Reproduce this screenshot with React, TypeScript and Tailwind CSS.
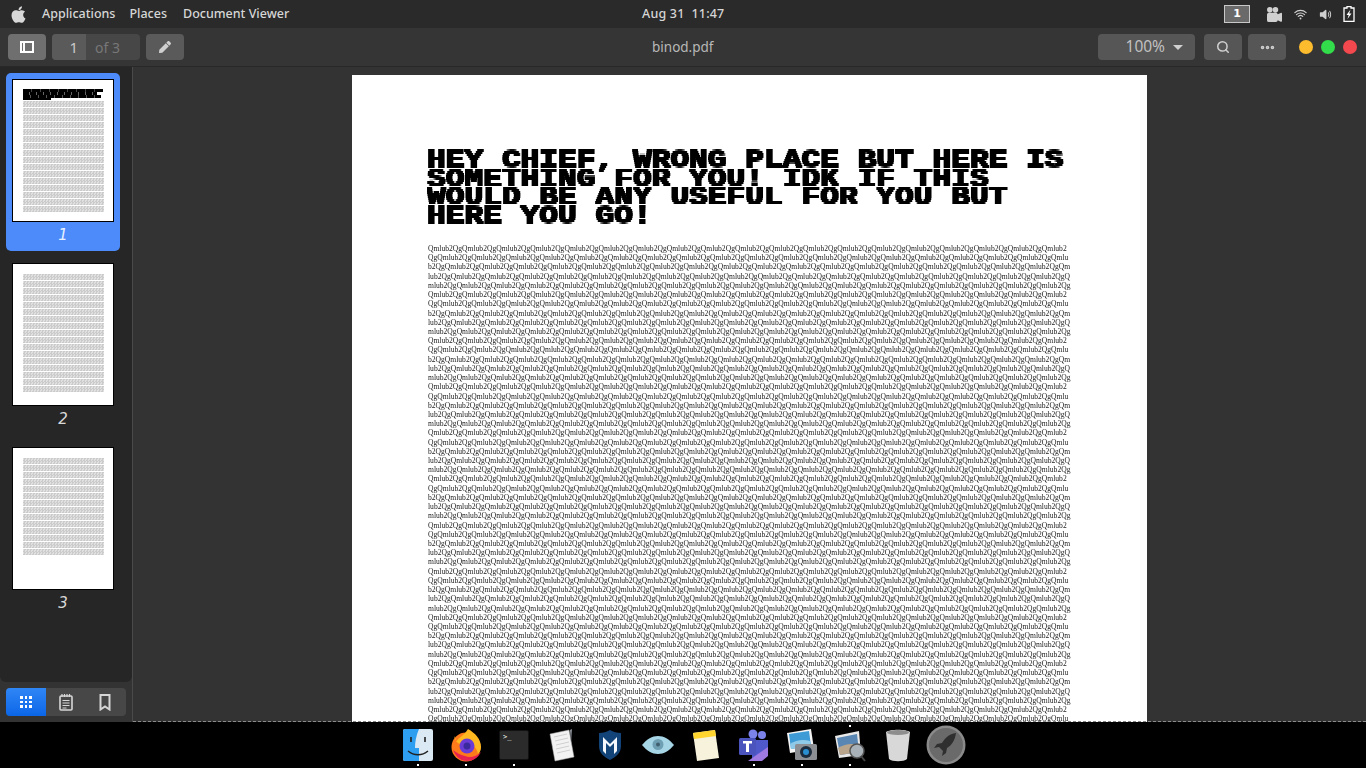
import { FaApple, FaPen } from "react-icons/fa";
import { BsCameraReelsFill } from "react-icons/bs";
import { IoVolumeMedium, IoWifi } from "react-icons/io5";
import { Ellipsis, Search } from "lucide-react";

const UI_FONT = "font-['Noto_Sans','Open_Sans',sans-serif]";
const BODY_TEXT = "Qmlub2Qg".repeat(1100);

function ThumbRows({ rows }: { rows: number }) {
  return (
    <div className="flex flex-col gap-[1px]">
      {Array.from({ length: rows }).map((_, i) => (
        <div
          key={i}
          className="h-[6px] w-[81px] bg-[repeating-conic-gradient(#cbcbcb_0_25%,#e0e0e0_0_50%)] bg-[length:3px_3px]"
        />
      ))}
    </div>
  );
}

function Thumb({ page, selected, rows }: { page: number; selected?: boolean; rows: number }) {
  return (
    <div className={`mx-[6px] flex h-[178px] w-[114px] flex-col items-center rounded-[5px] pt-[6px] ${selected ? "bg-[#4d8bfa]" : ""}`}>
      <div className={`h-[143px] w-[102px] border border-black bg-white px-[10px] ${selected ? "pt-[9px]" : "pt-[10px]"}`}>
        {selected ? (
          <div className="mb-[1px] flex flex-col">
            <div className="h-[3px] w-[80px] bg-[repeating-linear-gradient(90deg,#000_0_8px,#444_8px_9px)]" />
            <div className="h-[3px] w-[74px] bg-[repeating-linear-gradient(90deg,#000_0_6px,#666_6px_7px)]" />
            <div className="h-[3px] w-[78px] bg-[repeating-linear-gradient(90deg,#000_0_7px,#555_7px_8px)]" />
            <div className="h-[2px] w-[28px] bg-black" />
          </div>
        ) : null}
        <ThumbRows rows={rows} />
      </div>
      <span className={`mt-[3px] font-['DejaVu_Sans',sans-serif] text-[15px] leading-[20px] font-extralight italic ${selected ? "text-[#e6f0ff]" : "text-[#d8d8d8]"}`}>
        {page}
      </span>
    </div>
  );
}

function DockItem({ children, dot }: { children: React.ReactNode; dot?: boolean }) {
  return (
    <div className="relative flex h-[46px] w-[48px] items-center justify-center">
      {children}
      {dot ? <span className="absolute bottom-[2px] left-1/2 h-[2px] w-[2px] -translate-x-1/2 bg-white" /> : null}
    </div>
  );
}

function Dock() {
  return (
    <div className="flex h-[46px] shrink-0 justify-center bg-black pr-[2px]">
      <DockItem dot>
        <svg width="32" height="34" viewBox="0 0 32 34">
          <rect x="1" y="1" width="30" height="32" rx="2" fill="#dbe9f4" />
          <path d="M3 1h14c-3 7-4 13-4 19h4v13H3a2 2 0 0 1-2-2V3a2 2 0 0 1 2-2z" fill="#2e9ff0" />
          <path d="M6 23c6 5 14 5 20 0" fill="none" stroke="#222" strokeWidth="1.4" />
          <path d="M9 9v5M23 9v5" stroke="#222" strokeWidth="1.6" />
        </svg>
      </DockItem>
      <DockItem dot>
        <svg width="32" height="34" viewBox="0 0 32 34">
          <circle cx="16" cy="19" r="14.5" fill="#ff7a1a" />
          <path d="M4 8c2 2 2 5 2 6 3-5 8-6 12-13 7 4 13 10 13 18 0 3-1 5-3 7-2-8-6-10-12-10-5 0-9 2-12-8z" fill="#ffb81f" />
          <path d="M3 22c3 8 9 11 14 11 6 0 11-3 14-9-5 5-11 6-16 4-5-1-8-3-12-6z" fill="#e8224f" />
          <circle cx="17" cy="18" r="7.5" fill="#6b3bd6" />
          <circle cx="17" cy="18" r="3.5" fill="#3b2a9e" />
        </svg>
      </DockItem>
      <DockItem dot>
        <div className="h-[30px] w-[30px] rounded-[2px] border border-[#111] bg-[#2b2b2b] pt-[2px] pl-[3px] font-['DejaVu_Sans_Mono',monospace] text-[7px] leading-[8px] text-white">
          &gt;_
        </div>
      </DockItem>
      <DockItem>
        <svg width="28" height="34" viewBox="0 0 28 34">
          <path d="M2 6l19-4 5 27-19 4z" fill="#f2f2f2" stroke="#aaa" strokeWidth=".5" />
          <path d="M6 9l13-3M7 13l13-3M8 17l13-3M8 21l13-3M9 25l13-3" stroke="#c5c5c5" strokeWidth=".8" />
          <path d="M22 2l2-1-1 14z" fill="#8a8f96" />
        </svg>
      </DockItem>
      <DockItem>
        <svg width="24" height="32" viewBox="0 0 24 32">
          <path d="M12 1c3 2 7 3 11 3v13c0 7-5 11-11 14C6 28 1 24 1 17V4c4 0 8-1 11-3z" fill="#12447a" />
          <path d="M5 22V8l7 7 7-7v14l-3 3V14l-4 4-4-4v11z" fill="#f4f7fb" />
        </svg>
      </DockItem>
      <DockItem>
        <svg width="34" height="20" viewBox="0 0 34 20">
          <path d="M1 10c5-6 10-9 16-9s11 3 16 9c-5 6-10 9-16 9S6 16 1 10z" fill="#a6d6e6" />
          <circle cx="17" cy="9.5" r="5.5" fill="#6f9fb3" />
          <circle cx="17" cy="9.5" r="2" fill="#40606f" />
        </svg>
      </DockItem>
      <DockItem>
        <svg width="28" height="34" viewBox="0 0 28 34">
          <path d="M1 5l22-3 4 28-22 3z" fill="#f6f2dc" />
          <path d="M1 5l22-3 1 6-22 3z" fill="#ffd52e" />
        </svg>
      </DockItem>
      <DockItem dot>
        <svg width="32" height="34" viewBox="0 0 32 34">
          <circle cx="24" cy="7" r="4" fill="#7b83eb" />
          <circle cx="15" cy="6" r="4.5" fill="#7b83eb" />
          <path d="M14 12h16v12l-10 8h-6z" fill="#5059c9" />
          <rect x="1" y="10" width="17" height="17" rx="1.5" fill="#4b53bc" />
          <path d="M5 13h9v2.5h-3V24H8v-8.500H5z" fill="#fff" />
          <path d="M10 33l20-14v9l-6 5z" fill="#9f7ae0" />
        </svg>
      </DockItem>
      <DockItem dot>
        <svg width="32" height="34" viewBox="0 0 32 34">
          <path d="M1 5l24-4 3 20-24 4z" fill="#f4f4f4" />
          <path d="M3 6l20-3 2 15-20 3z" fill="#3f9bd6" />
          <path d="M4 16c6-4 13-5 20-3l1 5-20 3z" fill="#8fc9e8" />
          <rect x="9" y="16" width="22" height="16" rx="1.500" fill="#8b8f94" />
          <circle cx="20" cy="24" r="6" fill="#1a2c3d" />
          <circle cx="20" cy="24" r="3" fill="#2a8fd0" />
        </svg>
      </DockItem>
      <DockItem dot>
        <svg width="32" height="34" viewBox="0 0 32 34">
          <path d="M1 8l24-5 2 24-22 3z" fill="#e8e8e8" />
          <path d="M3 10l20-4 2 18-19 3z" fill="#5a86b3" />
          <path d="M4 20c7-4 13-5 21-3l0 7-19 3z" fill="#b9a58c" />
          <circle cx="23" cy="23" r="7" fill="#a9b2b8" stroke="#555" strokeWidth="1.500" />
          <path d="M27 28l4 5" stroke="#444" strokeWidth="2" />
        </svg>
        <span className="absolute top-[3px] left-1/2 h-[2px] w-[2px] -translate-x-1/2 bg-white" />
      </DockItem>
      <DockItem>
        <svg width="26" height="34" viewBox="0 0 26 34">
          <path d="M1 4c4-3 20-3 24 0l-3 27c-3 3-15 3-18 0z" fill="#d8d8d8" />
          <ellipse cx="13" cy="4.500" rx="11" ry="2.500" fill="#8e8e8e" />
        </svg>
      </DockItem>
      <DockItem>
        <svg width="40" height="40" viewBox="0 0 40 40">
          <circle cx="20" cy="20" r="19.500" fill="#8a8a8a" />
          <circle cx="20" cy="20" r="17" fill="#6a6a6a" />
          <path d="M30 8c-7 1-11 5-14 10l-5 1-3 4 5-1 4 4-1 5 4-3 1-5c5-3 8-8 9-15z" fill="#2f2f2f" />
        </svg>
      </DockItem>
    </div>
  );
}

export default function App() {
  return (
    <div className={`flex h-[768px] w-[1366px] flex-col overflow-hidden bg-black ${UI_FONT}`}>
      {/* blocky look of the pdf's pixel font */}
      <svg className="absolute h-0 w-0">
        <filter id="pixelate" x="0" y="0" width="100%" height="100%">
          <feFlood x="1" y="1" width="1" height="1" />
          <feComposite width="2" height="2" />
          <feTile result="grid" />
          <feComposite in="SourceGraphic" in2="grid" operator="in" />
          <feMorphology operator="dilate" radius="1" />
        </filter>
      </svg>

      <header className="relative flex h-[28px] shrink-0 items-center bg-[#2a2a2a] text-[12.500px] font-medium text-[#d6d6d6]">
        <FaApple className="ml-[9px] h-[19px] w-[19px] text-[#d8d8d8]" />
        <nav className="ml-[14px] flex gap-[14px]">
          <span>Applications</span>
          <span>Places</span>
          <span className="ml-[2px]">Document Viewer</span>
        </nav>
        <span className="absolute left-[642px] tracking-[0.2px]">Aug 31&nbsp;&nbsp;11:47</span>
        <div className="mr-[11px] ml-auto flex items-center gap-[12px]">
          <span className="flex h-[18px] w-[26px] items-center justify-center border border-[#c8c8c8] bg-[#6a6a6a] font-['DejaVu_Sans',sans-serif] text-[11px] font-bold text-white">
            1
          </span>
          <span className="flex items-center gap-[10px] pl-[4px] text-[#d0d0d0]">
            <BsCameraReelsFill className="h-[15px] w-[17px]" />
            <IoWifi className="h-[15px] w-[15px]" />
            <IoVolumeMedium className="h-[15px] w-[15px]" />
            <svg width="12" height="16" viewBox="0 0 12 16" className="text-white">
              <path d="M4 .5h4v1.500h3v13.500H1V2h3z" fill="none" stroke="currentColor" strokeWidth="1.300" />
              <path d="M7.500 3.500L3.500 9h2.200l-1.200 4 4-5.500H6.200z" fill="currentColor" />
            </svg>
          </span>
        </div>
      </header>

      <div className="flex h-[39px] shrink-0 items-center border-b border-[#282828] bg-[#353535] pl-[8px] text-[#cfcfcf]">
        <button className="flex h-[26px] w-[38px] items-center justify-center rounded-[4px] bg-[#6f6f6f]">
          <span className="flex h-[12px] w-[14px] border-2 border-white">
            <span className="w-[3px] border-r-2 border-white" />
          </span>
        </button>
        <div className="ml-[6px] flex h-[26px] w-[88px] overflow-hidden rounded-[4px] bg-[#474747]">
          <span className="flex w-[34px] items-center justify-end bg-[#5a5a5a] pr-[8px] text-[15px] text-[#c8c8c8]">1</span>
          <span className="flex items-center pl-[9px] text-[14px] text-[#777777]">of 3</span>
        </div>
        <button className="ml-[6px] flex h-[26px] w-[38px] items-center justify-center rounded-[4px] bg-[#5a5a5a]">
          <FaPen className="h-[12px] w-[12px]" />
        </button>
        <span className="ml-[468px] text-[13.500px] text-[#b8b8b8]">binod.pdf</span>
        <div className="ml-auto flex items-center gap-[6px] pr-[9px]">
          <button className="mr-[3px] flex h-[26px] w-[97px] items-center justify-end gap-[8px] rounded-[4px] bg-[#565656] pr-[12px] text-[15.500px] text-[#c0c0c0]">
            100%
            <span className="h-0 w-0 border-x-[5px] border-t-[5px] border-x-transparent border-t-[#d0d0d0]" />
          </button>
          <button className="flex h-[26px] w-[38px] items-center justify-center rounded-[4px] bg-[#565656]">
            <Search className="h-[14px] w-[14px]" strokeWidth={2.600} />
          </button>
          <button className="flex h-[26px] w-[38px] items-center justify-center rounded-[4px] bg-[#565656]">
            <Ellipsis className="h-[17px] w-[17px]" strokeWidth={3} />
          </button>
          <span className="ml-[7px] h-[14px] w-[14px] rounded-full bg-[#fdbc2e]" />
          <span className="ml-[2px] h-[14px] w-[14px] rounded-full bg-[#32dc4a]" />
          <span className="ml-[2px] h-[14px] w-[14px] rounded-full bg-[#f4484f]" />
        </div>
      </div>

      <div className="flex min-h-0 flex-1">
        <aside className="flex w-[133px] shrink-0 flex-col border-r border-[#4a4a4a] bg-[#333333]">
          <div className="flex flex-1 flex-col gap-[6px] rounded-b-[6px] bg-[#262626] pt-[6px]">
            <Thumb page={1} selected rows={16} />
            <Thumb page={2} rows={17} />
            <Thumb page={3} rows={14} />
          </div>
          <div className="mx-[6px] mt-[6px] mb-[6px] flex h-[28px] w-[120px] rounded-[4px] bg-[#474747] text-[#d6d6d6]">
            <span className="flex w-[40px] items-center justify-center rounded-l-[4px] bg-gradient-to-b from-[#2f86f5] to-[#0a66e8]">
              <span className="grid grid-cols-3 gap-[2px]">
                {Array.from({ length: 9 }).map((_, i) => (
                  <span key={i} className="h-[2.500px] w-[2.500px] bg-white" />
                ))}
              </span>
            </span>
            <span className="flex w-[40px] items-center justify-center">
              <svg width="14" height="17" viewBox="0 0 14 17" fill="none" stroke="currentColor">
                <path d="M2 2h10a1 1 0 0 1 1 1v12a1 1 0 0 1-1 1H2a1 1 0 0 1-1-1V3a1 1 0 0 1 1-1z" strokeWidth="1.600" />
                <path d="M3 0v3M5.500 0v3M8 0v3M10.500 0v3M3.500 6.500h7M3.500 9h7M3.500 11.500h7M3.500 14h4" strokeWidth="1.200" />
              </svg>
            </span>
            <span className="flex w-[38px] items-center justify-center">
              <svg width="12" height="17" viewBox="0 0 12 17" fill="none" stroke="currentColor" strokeWidth="2">
                <path d="M1.500 1h9v14.500L6 12.500l-4.500 3z" />
              </svg>
            </span>
          </div>
        </aside>

        <main className="relative min-w-0 flex-1 overflow-hidden bg-[#333333] pt-[8px]">
          <div className="mx-auto h-[800px] w-[795px] bg-white pt-[76px] pl-[75px] font-['Liberation_Serif',serif] text-[#1a1a1a]">
            <h1 className="w-[538px] origin-left scale-x-[1.2] font-['Liberation_Mono',monospace] text-[26px] leading-[18.600px] font-bold text-black [filter:url(#pixelate)]">
              HEY CHIEF, WRONG PLACE BUT HERE IS SOMETHING FOR YOU! IDK IF THIS WOULD BE ANY USEFUL FOR YOU BUT HERE YOU GO!
            </h1>
            <p className="mt-[19px] ml-[1px] w-[643px] text-[7.580px] leading-[9.220px] break-all [will-change:transform]">
              {BODY_TEXT}
            </p>
          </div>
          <div className="absolute inset-x-0 bottom-0 h-0 border-b border-dashed border-[#8a8a8a]" />
        </main>
      </div>

      <Dock />
    </div>
  );
}
